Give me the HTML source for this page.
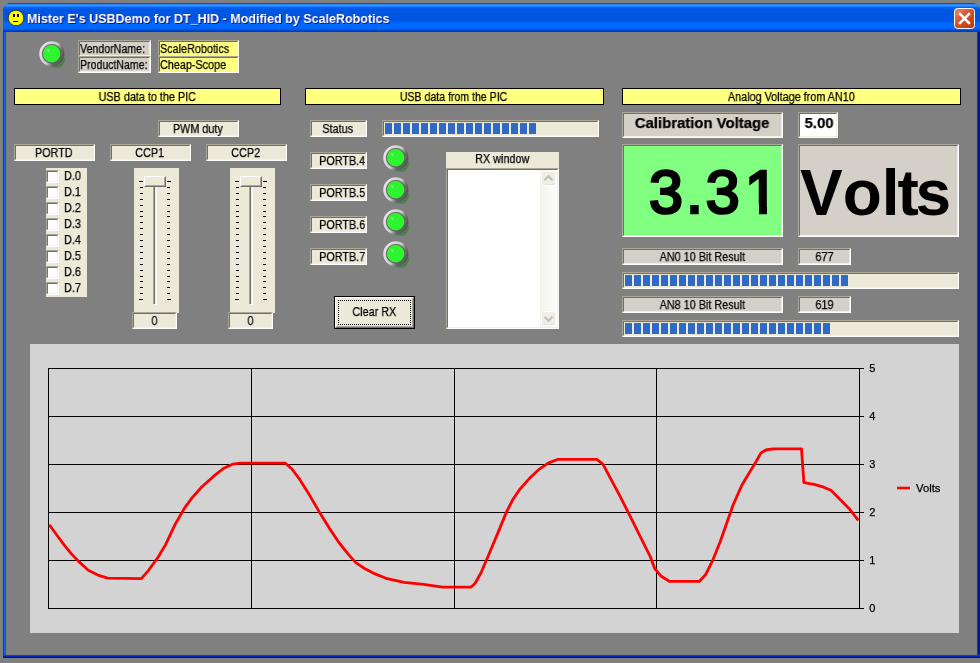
<!DOCTYPE html>
<html><head><meta charset="utf-8"><title>Mister E's USBDemo for DT_HID</title>
<style>
html,body{margin:0;padding:0;}
body{width:980px;height:663px;overflow:hidden;background:#808080;position:relative;font-family:"Liberation Sans",sans-serif;font-size:12.5px;color:#000;}
.lbl span,.hdr span,.plain span,.cbt,.btn span{will-change:transform;-webkit-text-stroke:0.25px #000;}
div{position:absolute;box-sizing:border-box;}
svg{position:absolute;overflow:visible;}
.win{left:3px;top:3px;width:977px;height:655px;border-radius:8px 8px 0 0;background:linear-gradient(to right,#0831d9 0,#0831d9 1px,#166aee 1px,#166aee 2px,#0855dd 2px,#0855dd 3px);}
.winb{left:3px;top:655px;width:977px;height:3px;background:linear-gradient(to bottom,#0040ee 0,#0040ee 1px,#0024b4 1px,#0024b4 2px,#00108c 2px,#00108c 3px);}
.winr{left:977px;top:10px;width:3px;height:648px;background:linear-gradient(to right,#0038d8 0,#0038d8 1px,#001ea0 1px,#001ea0 2px,#00138c 2px,#00138c 3px);}
.client{left:6px;top:32px;width:971px;height:623px;background:#808080;}
.title{left:3px;top:3px;width:977px;height:29px;border-radius:8px 8px 0 0;
 background:linear-gradient(to bottom,#004edc 0.5px,#2a84f8 1.5px,#3c96ff 2.5px,#1a7cff 3.5px,#0468f6 4.5px,#025eec 5.5px,#0055e1 6.5px,#0055e1 7.5px,#0055e1 8.5px,#0055e1 9.5px,#0055e1 10.5px,#0055e1 11.5px,#0055e1 12.5px,#0055e1 13.5px,#0055e1 14.5px,#0055e1 15.5px,#0055e1 16.5px,#0058e6 17.5px,#005cee 18.5px,#0062f6 19.5px,#0068ff 20.5px,#0068ff 21.5px,#0068ff 22.5px,#0068ff 23.5px,#0068ff 24.5px,#0064f8 25.5px,#0058e8 26.5px,#0048d4 27.5px,#0038c0 28.5px);}
.ttext{will-change:transform;left:27px;top:10px;transform:scaleX(0.927);white-space:nowrap;font-weight:bold;font-size:13.5px;line-height:18px;color:#fff;text-shadow:1px 1px 0 #0a1883;transform-origin:0 0;}
.lbl{background:#ece9d8;border:1px solid;border-color:#aca899 #fff #fff #aca899;text-align:center;white-space:nowrap;overflow:hidden;}
.lbl:before{content:"";position:absolute;left:0;top:0;right:0;bottom:0;border:1px solid;border-color:#716f64 #f1efe2 #f1efe2 #716f64;}
.lbl span,.hdr span,.plain span{position:relative;display:inline-block;line-height:13px;transform:scaleX(0.865);top:1px;left:-0.5px;}
.cl{background:#d4d0c8;}
.yl{background:#ffff80;}
.wh{background:#fff;}
.hdr{background:#ffff80;border:1px solid #000;text-align:center;white-space:nowrap;}
.plain{background:#ece9d8;text-align:center;white-space:nowrap;}
.cb{width:13px;height:13px;background:#fff;border:1px solid;border-color:#aca899 #fff #fff #aca899;}
.cb:before{content:"";position:absolute;left:0;top:0;right:0;bottom:0;border:1px solid;border-color:#716f64 #f1efe2 #f1efe2 #716f64;}
.cbt{white-space:nowrap;line-height:13px;transform:scaleX(0.87);transform-origin:0 0;margin-top:0px;}
.tick{height:1px;background:#000;}
.thumb{background:#ece9d8;border:1px solid;border-color:#fff #716f64 #716f64 #fff;}
.thumb:before{content:"";position:absolute;left:0;top:0;right:0;bottom:0;border:1px solid;border-color:#ece9d8 #aca899 #aca899 #ece9d8;}
.pb{background:#ece9d8;border:1px solid;border-color:#aca899 #fff #fff #aca899;}
.pb:before{content:"";position:absolute;left:0;top:0;right:0;bottom:0;border:1px solid;border-color:#716f64 #f1efe2 #f1efe2 #716f64;}
.blk{top:2px;width:7px;height:11px;background:#316ac5;}
.btn{background:#ece9d8;border:1px solid #000;text-align:center;}
.btn:before{content:"";position:absolute;left:0;top:0;right:0;bottom:0;border:1px solid;border-color:#fff #716f64 #716f64 #fff;}
.btn:after{content:"";position:absolute;left:1px;top:1px;right:1px;bottom:1px;border:1px solid;border-color:#ece9d8 #aca899 #aca899 #ece9d8;}
.focus{border:1px dotted #000;}
.big{will-change:transform;font-weight:bold;font-size:64px;line-height:64px;white-space:nowrap;font-kerning:none;}
</style></head><body>
<div class="win"></div><div class="winr"></div><div class="winb"></div><div class="client"></div>
<div class="title"></div>
<svg style="left:8px;top:10px" width="16" height="16" viewBox="0 0 16 16"><circle cx="8" cy="8" r="7.8" fill="#ffff00" stroke="#1a1a00" stroke-width="0.9" stroke-opacity="0.85"/><rect x="5" y="4" width="2" height="3" fill="#000"/><rect x="9" y="4" width="2" height="3" fill="#000"/><rect x="5" y="11" width="5" height="1" fill="#000"/></svg>
<div class="ttext" id="ttext">Mister E's USBDemo for DT_HID - Modified by ScaleRobotics</div>
<svg style="left:954px;top:8px" width="21" height="21" viewBox="0 0 21 21"><defs><linearGradient id="cg" x1="0" y1="0" x2="1" y2="1"><stop offset="0" stop-color="#e98d72"/><stop offset="0.45" stop-color="#d6532c"/><stop offset="1" stop-color="#b8330d"/></linearGradient></defs><rect x="0.5" y="0.5" width="20" height="20" rx="3" fill="url(#cg)" stroke="#fff" stroke-width="1"/><path d="M6 6 L15 15 M15 6 L6 15" stroke="#fff" stroke-width="2.5" stroke-linecap="square"/></svg>
<svg width="0" height="0" style="left:0;top:0"><defs><linearGradient id="lg" x1="0.07" y1="0.25" x2="0.93" y2="0.75"><stop offset="0" stop-color="#e2e2e2"/><stop offset="0.5" stop-color="#cccccc"/><stop offset="0.62" stop-color="#a0a0a0"/><stop offset="0.76" stop-color="#6a6a6a"/><stop offset="1" stop-color="#585858"/></linearGradient></defs></svg>
<svg style="left:39px;top:41px" width="28" height="28" viewBox="0 0 28 28"><ellipse cx="18.5" cy="19.5" rx="8" ry="7" fill="#4f7f4f" transform="rotate(-45 18.5 19.5)"/><circle cx="12.8" cy="12.8" r="11.3" fill="none" stroke="url(#lg)" stroke-width="2.6"/><circle cx="12.8" cy="12.8" r="9.6" fill="#606060"/><circle cx="12.6" cy="12.6" r="8.8" fill="#2ef62e"/><path d="M4.2 11.5 A8.6 8.6 0 0 1 21.2 11.5 Q12.6 14.5 4.2 11.5Z" fill="#22f522" opacity="0.0"/><circle cx="9.4" cy="9.6" r="1" fill="#9effa0"/></svg>
<svg style="left:383px;top:145px" width="28" height="28" viewBox="0 0 28 28"><ellipse cx="18.5" cy="19.5" rx="8" ry="7" fill="#4f7f4f" transform="rotate(-45 18.5 19.5)"/><circle cx="12.8" cy="12.8" r="11.3" fill="none" stroke="url(#lg)" stroke-width="2.6"/><circle cx="12.8" cy="12.8" r="9.6" fill="#606060"/><circle cx="12.6" cy="12.6" r="8.8" fill="#2ef62e"/><path d="M4.2 11.5 A8.6 8.6 0 0 1 21.2 11.5 Q12.6 14.5 4.2 11.5Z" fill="#22f522" opacity="0.0"/><circle cx="9.4" cy="9.6" r="1" fill="#9effa0"/></svg>
<svg style="left:383px;top:177px" width="28" height="28" viewBox="0 0 28 28"><ellipse cx="18.5" cy="19.5" rx="8" ry="7" fill="#4f7f4f" transform="rotate(-45 18.5 19.5)"/><circle cx="12.8" cy="12.8" r="11.3" fill="none" stroke="url(#lg)" stroke-width="2.6"/><circle cx="12.8" cy="12.8" r="9.6" fill="#606060"/><circle cx="12.6" cy="12.6" r="8.8" fill="#2ef62e"/><path d="M4.2 11.5 A8.6 8.6 0 0 1 21.2 11.5 Q12.6 14.5 4.2 11.5Z" fill="#22f522" opacity="0.0"/><circle cx="9.4" cy="9.6" r="1" fill="#9effa0"/></svg>
<svg style="left:383px;top:209px" width="28" height="28" viewBox="0 0 28 28"><ellipse cx="18.5" cy="19.5" rx="8" ry="7" fill="#4f7f4f" transform="rotate(-45 18.5 19.5)"/><circle cx="12.8" cy="12.8" r="11.3" fill="none" stroke="url(#lg)" stroke-width="2.6"/><circle cx="12.8" cy="12.8" r="9.6" fill="#606060"/><circle cx="12.6" cy="12.6" r="8.8" fill="#2ef62e"/><path d="M4.2 11.5 A8.6 8.6 0 0 1 21.2 11.5 Q12.6 14.5 4.2 11.5Z" fill="#22f522" opacity="0.0"/><circle cx="9.4" cy="9.6" r="1" fill="#9effa0"/></svg>
<svg style="left:383px;top:241px" width="28" height="28" viewBox="0 0 28 28"><ellipse cx="18.5" cy="19.5" rx="8" ry="7" fill="#4f7f4f" transform="rotate(-45 18.5 19.5)"/><circle cx="12.8" cy="12.8" r="11.3" fill="none" stroke="url(#lg)" stroke-width="2.6"/><circle cx="12.8" cy="12.8" r="9.6" fill="#606060"/><circle cx="12.6" cy="12.6" r="8.8" fill="#2ef62e"/><path d="M4.2 11.5 A8.6 8.6 0 0 1 21.2 11.5 Q12.6 14.5 4.2 11.5Z" fill="#22f522" opacity="0.0"/><circle cx="9.4" cy="9.6" r="1" fill="#9effa0"/></svg>
<div class="hdr" style="left:14px;top:88px;width:267px;height:17px;"><span style="">USB data to the PIC</span></div>
<div class="hdr" style="left:305px;top:88px;width:299px;height:17px;"><span style="transform:scaleX(0.845)">USB data from the PIC</span></div>
<div class="hdr" style="left:622px;top:88px;width:339px;height:17px;"><span style="">Analog Voltage from AN10</span></div>
<div class="lbl cl" style="left:78px;top:40px;width:73px;height:17px;text-align:left;"><span style="transform-origin:0 0;margin-left:1px;transform:scaleX(0.85);">VendorName:</span></div>
<div class="lbl cl" style="left:78px;top:56px;width:73px;height:17px;text-align:left;"><span style="transform-origin:0 0;margin-left:1px;transform:scaleX(0.845);">ProductName:</span></div>
<div class="lbl yl" style="left:158px;top:40px;width:81px;height:17px;text-align:left;"><span style="transform-origin:0 0;margin-left:1px;">ScaleRobotics</span></div>
<div class="lbl yl" style="left:158px;top:56px;width:81px;height:17px;text-align:left;"><span style="transform-origin:0 0;margin-left:1px;">Cheap-Scope</span></div>
<div class="lbl" style="left:158px;top:120px;width:81px;height:17px;"><span style="">PWM duty</span></div>
<div class="lbl" style="left:14px;top:144px;width:81px;height:17px;"><span style="">PORTD</span></div>
<div class="lbl" style="left:110px;top:144px;width:81px;height:17px;"><span style="">CCP1</span></div>
<div class="lbl" style="left:206px;top:144px;width:81px;height:17px;"><span style="">CCP2</span></div>
<div class="plain" style="left:46px;top:168px;width:41px;height:129px;"></div>
<div class="cb" style="left:46px;top:170px"></div><div class="cbt" style="left:64px;top:170px">D.0</div>
<div class="cb" style="left:46px;top:186px"></div><div class="cbt" style="left:64px;top:186px">D.1</div>
<div class="cb" style="left:46px;top:202px"></div><div class="cbt" style="left:64px;top:202px">D.2</div>
<div class="cb" style="left:46px;top:218px"></div><div class="cbt" style="left:64px;top:218px">D.3</div>
<div class="cb" style="left:46px;top:234px"></div><div class="cbt" style="left:64px;top:234px">D.4</div>
<div class="cb" style="left:46px;top:250px"></div><div class="cbt" style="left:64px;top:250px">D.5</div>
<div class="cb" style="left:46px;top:266px"></div><div class="cbt" style="left:64px;top:266px">D.6</div>
<div class="cb" style="left:46px;top:282px"></div><div class="cbt" style="left:64px;top:282px">D.7</div>
<div class="plain" style="left:134px;top:168px;width:45px;height:145px;"></div>
<div style="left:153px;top:178px;width:4px;height:127px;border:1px solid;border-color:#aca899 #fff #fff #aca899;background:#f1efe2;border-left-color:#aca899;"></div><div style="left:154px;top:179px;width:1px;height:125px;background:#716f64;"></div><div class="tick" style="left:139px;top:181px;width:4px"></div><div class="tick" style="left:167px;top:181px;width:4px"></div><div class="tick" style="left:140px;top:187px;width:3px"></div><div class="tick" style="left:167px;top:187px;width:3px"></div><div class="tick" style="left:140px;top:193px;width:3px"></div><div class="tick" style="left:167px;top:193px;width:3px"></div><div class="tick" style="left:140px;top:199px;width:3px"></div><div class="tick" style="left:167px;top:199px;width:3px"></div><div class="tick" style="left:140px;top:205px;width:3px"></div><div class="tick" style="left:167px;top:205px;width:3px"></div><div class="tick" style="left:140px;top:211px;width:3px"></div><div class="tick" style="left:167px;top:211px;width:3px"></div><div class="tick" style="left:140px;top:216px;width:3px"></div><div class="tick" style="left:167px;top:216px;width:3px"></div><div class="tick" style="left:140px;top:222px;width:3px"></div><div class="tick" style="left:167px;top:222px;width:3px"></div><div class="tick" style="left:140px;top:228px;width:3px"></div><div class="tick" style="left:167px;top:228px;width:3px"></div><div class="tick" style="left:140px;top:234px;width:3px"></div><div class="tick" style="left:167px;top:234px;width:3px"></div><div class="tick" style="left:140px;top:240px;width:3px"></div><div class="tick" style="left:167px;top:240px;width:3px"></div><div class="tick" style="left:140px;top:246px;width:3px"></div><div class="tick" style="left:167px;top:246px;width:3px"></div><div class="tick" style="left:140px;top:252px;width:3px"></div><div class="tick" style="left:167px;top:252px;width:3px"></div><div class="tick" style="left:140px;top:258px;width:3px"></div><div class="tick" style="left:167px;top:258px;width:3px"></div><div class="tick" style="left:140px;top:264px;width:3px"></div><div class="tick" style="left:167px;top:264px;width:3px"></div><div class="tick" style="left:140px;top:270px;width:3px"></div><div class="tick" style="left:167px;top:270px;width:3px"></div><div class="tick" style="left:140px;top:276px;width:3px"></div><div class="tick" style="left:167px;top:276px;width:3px"></div><div class="tick" style="left:140px;top:281px;width:3px"></div><div class="tick" style="left:167px;top:281px;width:3px"></div><div class="tick" style="left:140px;top:287px;width:3px"></div><div class="tick" style="left:167px;top:287px;width:3px"></div><div class="tick" style="left:140px;top:293px;width:3px"></div><div class="tick" style="left:167px;top:293px;width:3px"></div><div class="tick" style="left:139px;top:299px;width:4px"></div><div class="tick" style="left:167px;top:299px;width:4px"></div>
<div class="thumb" style="left:144px;top:176px;width:22px;height:11px"></div>
<div class="lbl" style="left:132px;top:312px;width:45px;height:17px;"><span style="">0</span></div>
<div class="plain" style="left:230px;top:168px;width:45px;height:145px;"></div>
<div style="left:249px;top:178px;width:4px;height:127px;border:1px solid;border-color:#aca899 #fff #fff #aca899;background:#f1efe2;border-left-color:#aca899;"></div><div style="left:250px;top:179px;width:1px;height:125px;background:#716f64;"></div><div class="tick" style="left:235px;top:181px;width:4px"></div><div class="tick" style="left:263px;top:181px;width:4px"></div><div class="tick" style="left:236px;top:187px;width:3px"></div><div class="tick" style="left:263px;top:187px;width:3px"></div><div class="tick" style="left:236px;top:193px;width:3px"></div><div class="tick" style="left:263px;top:193px;width:3px"></div><div class="tick" style="left:236px;top:199px;width:3px"></div><div class="tick" style="left:263px;top:199px;width:3px"></div><div class="tick" style="left:236px;top:205px;width:3px"></div><div class="tick" style="left:263px;top:205px;width:3px"></div><div class="tick" style="left:236px;top:211px;width:3px"></div><div class="tick" style="left:263px;top:211px;width:3px"></div><div class="tick" style="left:236px;top:216px;width:3px"></div><div class="tick" style="left:263px;top:216px;width:3px"></div><div class="tick" style="left:236px;top:222px;width:3px"></div><div class="tick" style="left:263px;top:222px;width:3px"></div><div class="tick" style="left:236px;top:228px;width:3px"></div><div class="tick" style="left:263px;top:228px;width:3px"></div><div class="tick" style="left:236px;top:234px;width:3px"></div><div class="tick" style="left:263px;top:234px;width:3px"></div><div class="tick" style="left:236px;top:240px;width:3px"></div><div class="tick" style="left:263px;top:240px;width:3px"></div><div class="tick" style="left:236px;top:246px;width:3px"></div><div class="tick" style="left:263px;top:246px;width:3px"></div><div class="tick" style="left:236px;top:252px;width:3px"></div><div class="tick" style="left:263px;top:252px;width:3px"></div><div class="tick" style="left:236px;top:258px;width:3px"></div><div class="tick" style="left:263px;top:258px;width:3px"></div><div class="tick" style="left:236px;top:264px;width:3px"></div><div class="tick" style="left:263px;top:264px;width:3px"></div><div class="tick" style="left:236px;top:270px;width:3px"></div><div class="tick" style="left:263px;top:270px;width:3px"></div><div class="tick" style="left:236px;top:276px;width:3px"></div><div class="tick" style="left:263px;top:276px;width:3px"></div><div class="tick" style="left:236px;top:281px;width:3px"></div><div class="tick" style="left:263px;top:281px;width:3px"></div><div class="tick" style="left:236px;top:287px;width:3px"></div><div class="tick" style="left:263px;top:287px;width:3px"></div><div class="tick" style="left:236px;top:293px;width:3px"></div><div class="tick" style="left:263px;top:293px;width:3px"></div><div class="tick" style="left:235px;top:299px;width:4px"></div><div class="tick" style="left:263px;top:299px;width:4px"></div>
<div class="thumb" style="left:240px;top:176px;width:22px;height:11px"></div>
<div class="lbl" style="left:228px;top:312px;width:45px;height:17px;"><span style="">0</span></div>
<div class="lbl" style="left:310px;top:120px;width:57px;height:17px;"><span style="">Status</span></div>
<div class="lbl" style="left:310px;top:152px;width:57px;height:17px;text-align:right;"><span style="transform-origin:100% 0;margin-right:0px;">PORTB.4</span></div>
<div class="lbl" style="left:310px;top:184px;width:57px;height:17px;text-align:right;"><span style="transform-origin:100% 0;margin-right:0px;">PORTB.5</span></div>
<div class="lbl" style="left:310px;top:216px;width:57px;height:17px;text-align:right;"><span style="transform-origin:100% 0;margin-right:0px;">PORTB.6</span></div>
<div class="lbl" style="left:310px;top:248px;width:57px;height:17px;text-align:right;"><span style="transform-origin:100% 0;margin-right:0px;">PORTB.7</span></div>
<div class="pb" style="left:382px;top:120px;width:217px;height:17px"><div class="blk" style="left:2px"></div><div class="blk" style="left:11px"></div><div class="blk" style="left:20px"></div><div class="blk" style="left:29px"></div><div class="blk" style="left:38px"></div><div class="blk" style="left:47px"></div><div class="blk" style="left:56px"></div><div class="blk" style="left:65px"></div><div class="blk" style="left:74px"></div><div class="blk" style="left:83px"></div><div class="blk" style="left:92px"></div><div class="blk" style="left:101px"></div><div class="blk" style="left:110px"></div><div class="blk" style="left:119px"></div><div class="blk" style="left:128px"></div><div class="blk" style="left:137px"></div><div class="blk" style="left:146px"></div></div>
<div class="pb" style="left:622px;top:272px;width:337px;height:17px"><div class="blk" style="left:2px"></div><div class="blk" style="left:11px"></div><div class="blk" style="left:20px"></div><div class="blk" style="left:29px"></div><div class="blk" style="left:38px"></div><div class="blk" style="left:47px"></div><div class="blk" style="left:56px"></div><div class="blk" style="left:65px"></div><div class="blk" style="left:74px"></div><div class="blk" style="left:83px"></div><div class="blk" style="left:92px"></div><div class="blk" style="left:101px"></div><div class="blk" style="left:110px"></div><div class="blk" style="left:119px"></div><div class="blk" style="left:128px"></div><div class="blk" style="left:137px"></div><div class="blk" style="left:146px"></div><div class="blk" style="left:155px"></div><div class="blk" style="left:164px"></div><div class="blk" style="left:173px"></div><div class="blk" style="left:182px"></div><div class="blk" style="left:191px"></div><div class="blk" style="left:200px"></div><div class="blk" style="left:209px"></div><div class="blk" style="left:218px"></div></div>
<div class="pb" style="left:622px;top:320px;width:337px;height:17px"><div class="blk" style="left:2px"></div><div class="blk" style="left:11px"></div><div class="blk" style="left:20px"></div><div class="blk" style="left:29px"></div><div class="blk" style="left:38px"></div><div class="blk" style="left:47px"></div><div class="blk" style="left:56px"></div><div class="blk" style="left:65px"></div><div class="blk" style="left:74px"></div><div class="blk" style="left:83px"></div><div class="blk" style="left:92px"></div><div class="blk" style="left:101px"></div><div class="blk" style="left:110px"></div><div class="blk" style="left:119px"></div><div class="blk" style="left:128px"></div><div class="blk" style="left:137px"></div><div class="blk" style="left:146px"></div><div class="blk" style="left:155px"></div><div class="blk" style="left:164px"></div><div class="blk" style="left:173px"></div><div class="blk" style="left:182px"></div><div class="blk" style="left:191px"></div><div class="blk" style="left:200px"></div></div>
<div class="plain" style="left:446px;top:152px;width:113px;height:16px;"><span style="line-height:15px;top:0px">RX window</span></div>
<div class="lbl wh" style="left:446px;top:168px;width:113px;height:161px"></div>
<div style="left:540px;top:170px;width:17px;height:157px;background:linear-gradient(to right,#f3f1ec,#fefefb)"></div>
<svg style="left:541px;top:171px" width="15" height="15" viewBox="0 0 15 15"><rect x="0.5" y="0.5" width="14" height="14" rx="2.5" fill="#dedccf" stroke="#fff"/><rect x="1" y="1" width="12.5" height="12.5" rx="2" fill="#efeee7"/><path d="M3.5 9.3 L7.5 5.3 L11.5 9.3" fill="none" stroke="#c3c1b5" stroke-width="2.3"/></svg>
<svg style="left:541px;top:311px" width="15" height="15" viewBox="0 0 15 15"><rect x="0.5" y="0.5" width="14" height="14" rx="2.5" fill="#dedccf" stroke="#fff"/><rect x="1" y="1" width="12.5" height="12.5" rx="2" fill="#efeee7"/><path d="M3.5 5.7 L7.5 9.7 L11.5 5.7" fill="none" stroke="#c3c1b5" stroke-width="2.3"/></svg>
<div class="btn" style="left:334px;top:296px;width:81px;height:33px"><span style="position:relative;display:inline-block;line-height:13px;margin-top:9px;transform:scaleX(0.865)">Clear RX</span></div>
<div class="focus" style="left:338px;top:300px;width:73px;height:25px"></div>
<div class="lbl cl" style="left:622px;top:112px;width:161px;height:26px;"><span style="font-weight:bold;font-size:15.5px;line-height:17px;transform:scaleX(0.96);margin-top:-0.5px">Calibration Voltage</span></div>
<div class="lbl wh" style="left:798px;top:112px;width:40px;height:26px;"><span style="font-weight:bold;font-size:15.5px;line-height:17px;transform:scaleX(0.96);margin-top:-0.5px;left:1px">5.00</span></div>
<div class="lbl" style="left:622px;top:144px;width:161px;height:93px;background:#80ff80"></div>
<div class="lbl cl" style="left:798px;top:144px;width:161px;height:93px"></div>
<div class="big" id="big1" style="left:649px;top:160px;font-weight:normal;font-size:61px;-webkit-text-stroke:2.7px #000;letter-spacing:3px">3.3<span style="margin-left:2px">1</span></div>
<div style="left:744px;top:205px;width:15px;height:14px;background:#80ff80"></div><div style="left:767px;top:205px;width:14px;height:14px;background:#80ff80"></div>
<div class="big" id="big2" style="left:800px;top:161px">Vol<span style="margin-left:-2px">t</span><span style="margin-left:-3.5px">s</span></div>
<div class="lbl cl" style="left:622px;top:248px;width:161px;height:17px;"><span style="">AN0 10 Bit Result</span></div>
<div class="lbl cl" style="left:798px;top:248px;width:53px;height:17px;"><span style="">677</span></div>
<div class="lbl cl" style="left:622px;top:296px;width:161px;height:17px;"><span style="">AN8 10 Bit Result</span></div>
<div class="lbl cl" style="left:798px;top:296px;width:53px;height:17px;"><span style="">619</span></div>
<div style="left:30px;top:344px;width:929px;height:289px;background:#d3d3d3"></div>
<svg style="left:0;top:0;will-change:transform" width="980" height="663" viewBox="0 0 980 663" font-family="Liberation Sans, sans-serif" font-size="11" stroke="#000" stroke-width="0.25"><path d="M48 368.5 H864" stroke="#000" stroke-width="1" shape-rendering="crispEdges"/><path d="M48 416.5 H864" stroke="#000" stroke-width="1" shape-rendering="crispEdges"/><path d="M48 464.5 H864" stroke="#000" stroke-width="1" shape-rendering="crispEdges"/><path d="M48 512.5 H864" stroke="#000" stroke-width="1" shape-rendering="crispEdges"/><path d="M48 560.5 H864" stroke="#000" stroke-width="1" shape-rendering="crispEdges"/><path d="M48 608.5 H864" stroke="#000" stroke-width="1" shape-rendering="crispEdges"/><path d="M48.5 368 V609" stroke="#000" stroke-width="1" shape-rendering="crispEdges"/><path d="M251.5 368 V609" stroke="#000" stroke-width="1" shape-rendering="crispEdges"/><path d="M454.5 368 V609" stroke="#000" stroke-width="1" shape-rendering="crispEdges"/><path d="M656.5 368 V609" stroke="#000" stroke-width="1" shape-rendering="crispEdges"/><path d="M859.5 368 V609" stroke="#000" stroke-width="1" shape-rendering="crispEdges"/><text x="869.3" y="372.0">5</text><text x="869.3" y="420.0">4</text><text x="869.3" y="468.0">3</text><text x="869.3" y="516.0">2</text><text x="869.3" y="564.0">1</text><text x="869.3" y="612.0">0</text><polyline points="49.3,524.8 56.9,535.3 64.1,544.9 71.4,553.9 78.6,561.4 88.3,570.3 97.9,575.1 107.6,578.2 141.3,578.7 148.6,570.3 158.2,557 165.5,544.9 175.1,524.4 184.8,507.6 192,497.9 201.7,487 213.7,476.2 223.4,468.5 233,464.1 240.2,463.2 285.4,463.2 291.9,469 299.1,478.6 307.6,491.9 319.6,512.4 329.3,528.1 338.9,542.5 348.6,554.6 355.8,562.6 365.5,569.1 375.1,573.9 387.2,578.7 404.1,582.3 423.4,584.3 442.7,587.2 470.9,587.2 475,583.5 481,572.7 488.3,555.8 497.9,532.9 506.3,512.4 512.4,500.3 519.6,489.5 529.3,478.6 538.9,469.4 548.6,462.9 558.2,459.3 596.8,459.3 602.9,464.1 611.3,479.8 620.9,497.9 630.6,517.2 640.2,536.5 649.9,555.8 654.8,568.7 660.9,576 669.3,581.3 699.5,581.3 705.5,574.8 712.7,560.3 720,542.2 727.2,521.7 733.2,504.8 741.7,485.5 748.9,473.4 756.2,461.4 761,452.9 765.8,450 773,448.8 801.5,448.8 803.9,482.6 814.1,484.3 823.7,487.2 830.9,490.3 840.6,500 849,508.4 858.3,520.3" fill="none" stroke="#ff0000" stroke-width="2.8" stroke-linejoin="round"/><path d="M897 488 H910" stroke="#ff0000" stroke-width="2.6"/><text x="916" y="492" textLength="24.5" lengthAdjust="spacingAndGlyphs">Volts</text></svg>
</body></html>
